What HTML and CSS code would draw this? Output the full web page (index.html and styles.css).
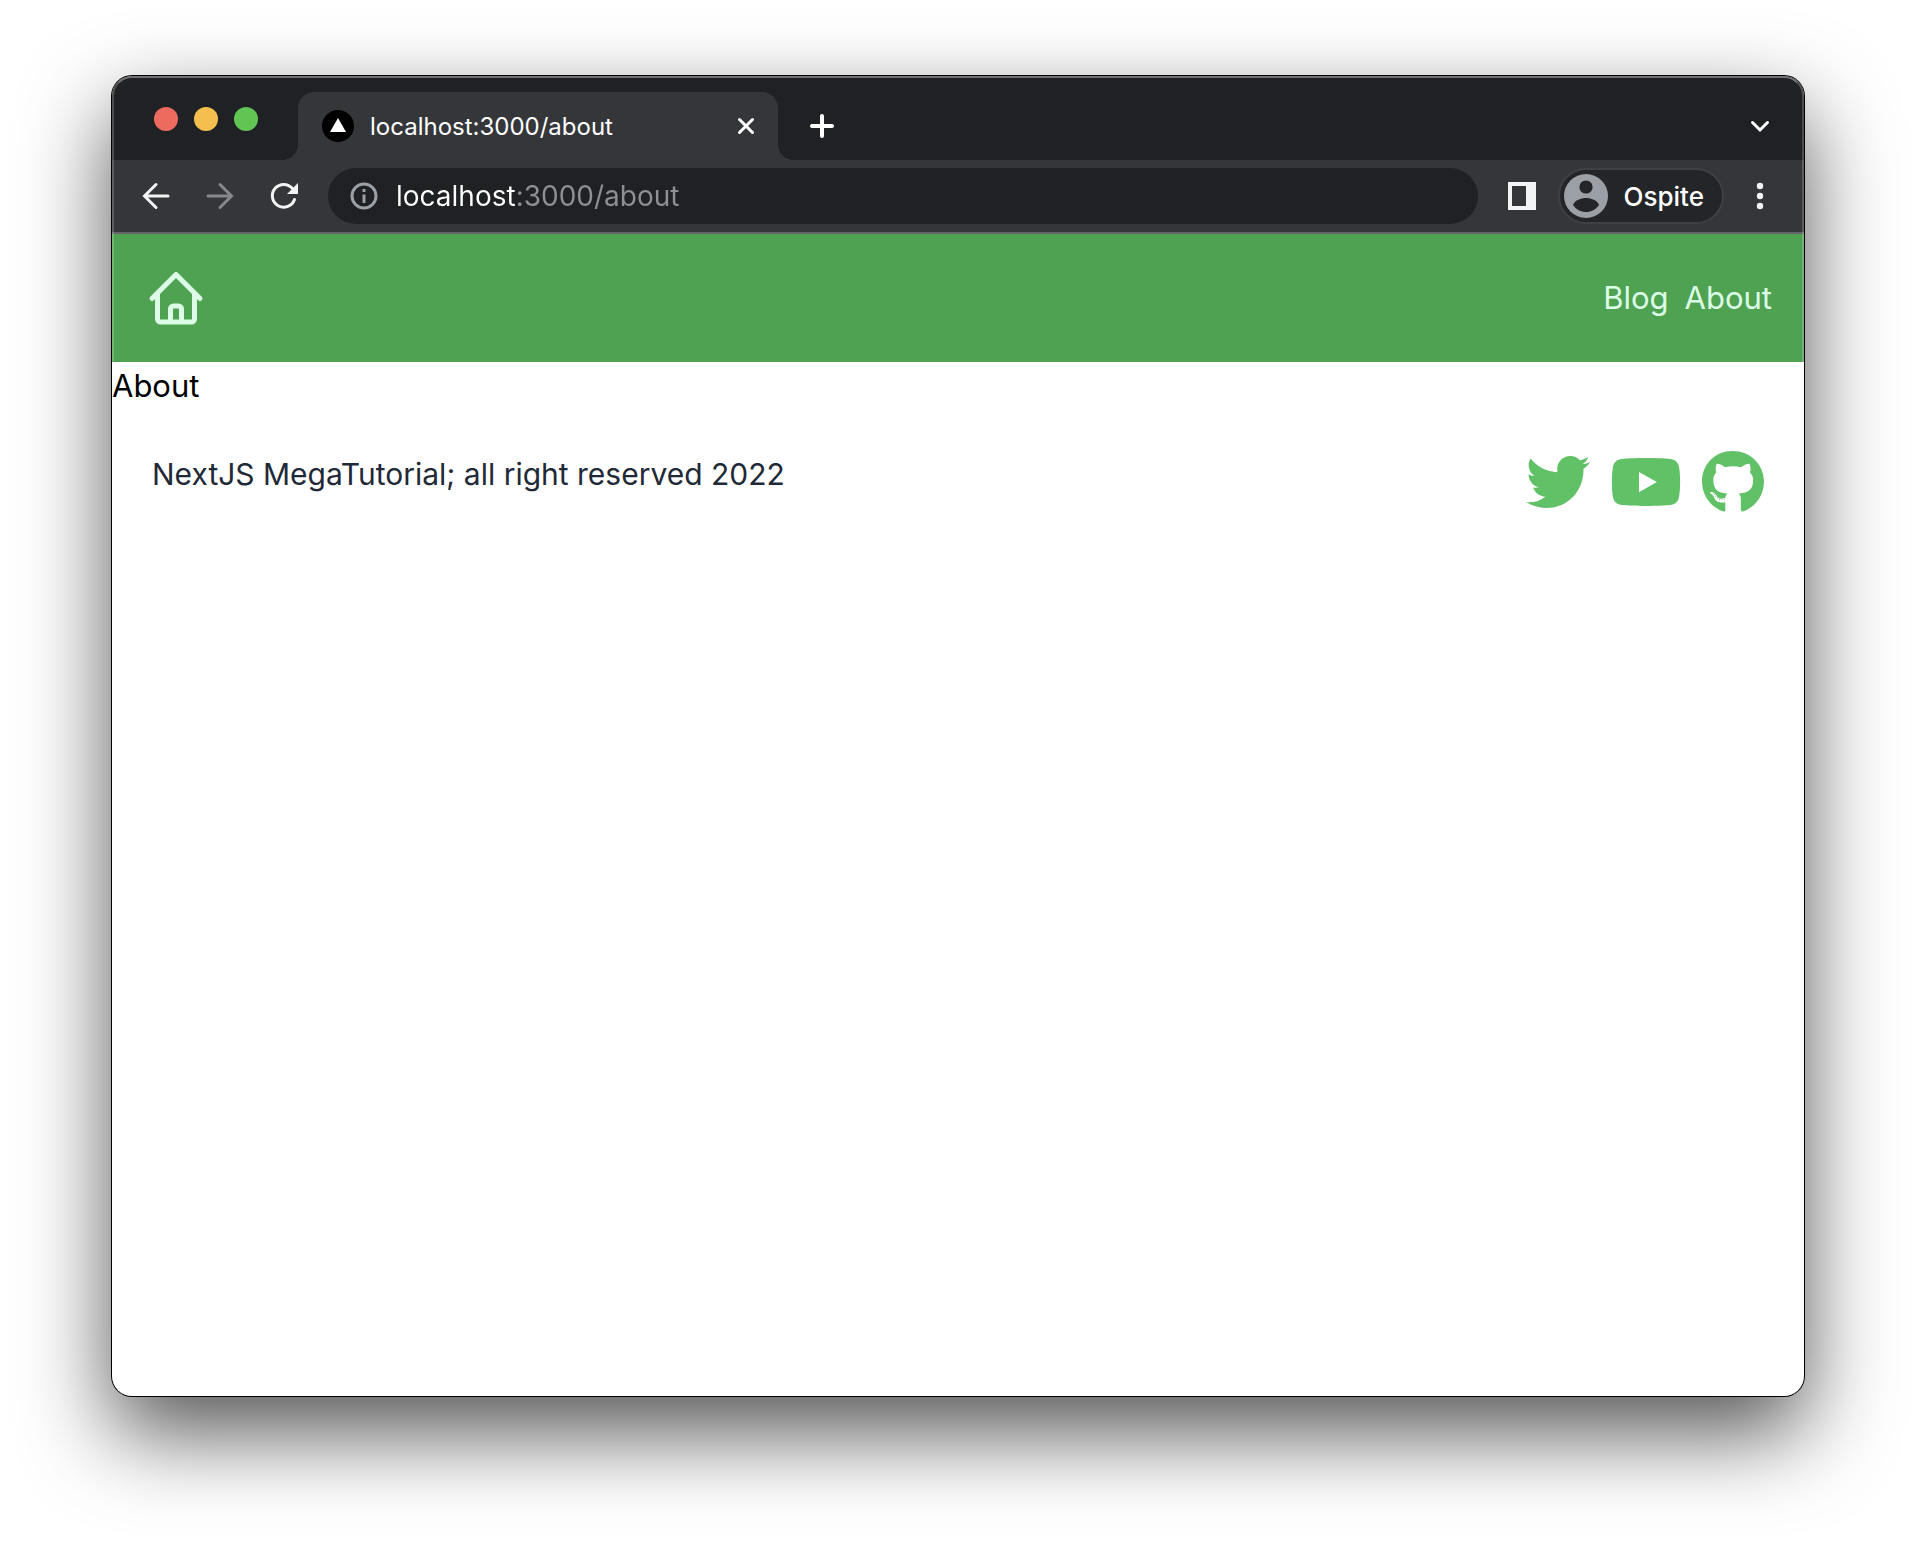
FILE: index.html
```html
<!DOCTYPE html>
<html lang="en">
<head>
<meta charset="utf-8">
<meta name="viewport" content="width=device-width, initial-scale=1">
<title>localhost:3000/about</title>
<link rel="stylesheet" href="styles.css">
</head>
<body>
<div class="window">
  <div class="tab-strip">
    <div class="lights">
      <button class="light light-close" aria-label="Close window"></button>
      <button class="light light-minimize" aria-label="Minimize window"></button>
      <button class="light light-zoom" aria-label="Zoom window"></button>
    </div>
    <div class="tab">
      <svg class="favicon" viewBox="0 0 32 32" aria-hidden="true"><circle cx="16" cy="16" r="16"/><path d="M16 8l8 14H8z" fill="#fff"/></svg>
      <span class="tab-title">localhost:3000/about</span>
      <button class="tab-close" aria-label="Close tab"><svg viewBox="0 0 24 24" width="24" height="24"><path d="M5.500 5.500l13 13m0-13l-13 13"/></svg></button>
    </div>
    <button class="strip-button" aria-label="New tab"><svg viewBox="0 0 24 24" width="24" height="24"><path class="thick" d="M12 2v20M2 12h20"/></svg></button>
    <button class="strip-button tab-search" aria-label="Search tabs"><svg viewBox="0 0 24 24" width="24" height="24"><path d="M4.500 8.500l7.500 7.500 7.500-7.500"/></svg></button>
  </div>
  <div class="toolbar">
    <button class="tool" aria-label="Back"><svg viewBox="0 0 32 32" width="32" height="32"><path d="M28 16H5M16 4.500L4.500 16 16 27.500"/></svg></button>
    <button class="tool tool-off" aria-label="Forward" disabled><svg viewBox="0 0 32 32" width="32" height="32"><path d="M4 16h23M16 4.500L27.500 16 16 27.500"/></svg></button>
    <button class="tool" aria-label="Reload"><svg viewBox="0 0 32 32" width="32" height="32"><path d="M26.500 19.500A11.400 11.400 0 1 1 24.500 8.500"/><path class="solid" d="M30 3v11H19z"/></svg></button>
    <label class="omnibox">
      <svg viewBox="0 0 28 28" width="28" height="28" aria-hidden="true"><circle cx="14" cy="14" r="12"/><path class="info" d="M14 12.500V21M14 7v3"/></svg>
      <input class="address" type="text" value="localhost:3000/about" aria-label="Address">
    </label>
    <button class="tool" aria-label="Side panel"><svg viewBox="0 0 28 28" width="28" height="28"><path class="solid" fill-rule="evenodd" d="M0 0h28v28H0zM4 4v20h14V4z"/></svg></button>
    <button class="profile">
      <svg viewBox="0 0 44 44" width="44" height="44" aria-hidden="true"><circle cx="22" cy="22" r="22" fill="#9aa0a6"/><circle cx="22" cy="13" r="6.600" fill="#242528"/><path d="M9 31C11 26 17 24 22 24s11 2 13 7c-3 4.500-8 7-13 7s-10-2.500-13-7z" fill="#242528"/></svg>
      <span>Ospite</span>
    </button>
    <button class="tool" aria-label="Menu"><svg viewBox="0 0 28 28" width="28" height="28"><g class="solid"><circle cx="14" cy="4" r="3.200"/><circle cx="14" cy="14" r="3.200"/><circle cx="14" cy="24" r="3.200"/></g></svg></button>
  </div>
  <div class="page">
    <header class="header">
      <a class="home" href="#" aria-label="Home"><svg viewBox="0 0 64 64" width="64" height="64"><path d="M8 32.500L32 8.500l24 24M13.500 28v25a3 3 0 0 0 3 3h31a3 3 0 0 0 3-3V28M26.500 55V43a3 3 0 0 1 3-3h5a3 3 0 0 1 3 3v12"/></svg></a>
      <nav class="nav">
        <a href="#">Blog</a>
        <a href="#">About</a>
      </nav>
    </header>
    <main>About</main>
    <footer class="footer">
      <p>NextJS MegaTutorial; all right reserved 2022</p>
      <div class="social">
        <a href="#" aria-label="Twitter"><svg viewBox="0 0 512 512" width="64" height="64"><path d="M459.370 151.716c.325 4.548.325 9.097.325 13.645 0 138.720-105.583 298.558-298.558 298.558-59.452 0-114.680-17.219-161.137-47.106 8.447.974 16.568 1.299 25.340 1.299 49.055 0 94.213-16.568 130.274-44.832-46.132-.975-84.792-31.188-98.112-72.772 6.498.974 12.995 1.624 19.818 1.624 9.421 0 18.843-1.300 27.614-3.573-48.081-9.747-84.143-51.980-84.143-102.985v-1.299c13.969 7.797 30.214 12.670 47.431 13.319-28.264-18.843-46.781-51.005-46.781-87.391 0-19.492 5.197-37.360 14.294-52.954 51.655 63.675 129.300 105.258 216.365 109.807-1.624-7.797-2.599-15.918-2.599-24.040 0-57.828 46.782-104.934 104.934-104.934 30.213 0 57.502 12.670 76.670 33.137 23.715-4.548 46.456-13.320 66.599-25.340-7.798 24.366-24.366 44.833-46.132 57.827 21.117-2.273 41.584-8.122 60.426-16.243-14.292 20.791-32.161 39.308-52.628 54.253z"/></svg></a>
        <a href="#" aria-label="YouTube"><svg viewBox="0 0 576 512" width="72" height="64"><path d="M549.655 124.083c-6.281-23.650-24.787-42.276-48.284-48.597C458.781 64 288 64 288 64S117.220 64 74.629 75.486c-23.497 6.322-42.003 24.947-48.284 48.597-11.412 42.867-11.412 132.305-11.412 132.305s0 89.438 11.412 132.305c6.281 23.650 24.787 41.500 48.284 47.821C117.220 448 288 448 288 448s170.780 0 213.371-11.486c23.497-6.321 42.003-24.171 48.284-47.821 11.412-42.867 11.412-132.305 11.412-132.305s0-89.438-11.412-132.305zm-317.510 213.508V175.185l142.739 81.205-142.739 81.201z"/></svg></a>
        <a href="#" aria-label="GitHub"><svg viewBox="0 0 496 512" width="62" height="64"><path d="M165.900 397.400c0 2-2.300 3.600-5.200 3.600-3.300.3-5.600-1.300-5.600-3.600 0-2 2.300-3.600 5.200-3.600 3-.3 5.600 1.300 5.600 3.600zm-31.100-4.500c-.7 2 1.300 4.300 4.300 4.900 2.600 1 5.600 0 6.200-2s-1.300-4.300-4.300-5.200c-2.600-.7-5.500.3-6.200 2.300zm44.200-1.700c-2.900.7-4.900 2.600-4.600 4.900.3 2 2.900 3.300 5.900 2.600 2.900-.7 4.900-2.600 4.600-4.600-.3-1.900-3-3.200-5.900-2.900zM244.800 8C106.100 8 0 113.300 0 252c0 110.900 69.800 205.800 169.500 239.200 12.800 2.300 17.300-5.600 17.300-12.100 0-6.200-.3-40.400-.3-61.400 0 0-70 15-84.700-29.800 0 0-11.400-29.100-27.800-36.600 0 0-22.900-15.700 1.600-15.400 0 0 24.900 2 38.600 25.800 21.900 38.600 58.600 27.500 72.900 20.900 2.300-16 8.800-27.100 16-33.700-55.900-6.200-112.300-14.300-112.300-110.500 0-27.500 7.600-41.300 23.600-58.900-2.600-6.500-11.100-33.300 2.600-67.900 20.900-6.500 69 27 69 27 20-5.600 41.500-8.500 62.800-8.500s42.800 2.900 62.800 8.500c0 0 48.100-33.600 69-27 13.700 34.700 5.200 61.400 2.600 67.900 16 17.700 25.800 31.500 25.800 58.900 0 96.500-58.900 104.200-114.800 110.500 9.200 7.900 17 22.900 17 46.400 0 33.700-.3 75.400-.3 83.600 0 6.500 4.600 14.400 17.300 12.100C428.200 457.800 496 362.900 496 252 496 113.300 383.500 8 244.800 8zM97.200 352.900c-1.300 1-1 3.300.7 5.200 1.600 1.600 3.900 2.300 5.200 1 1.300-1 1-3.300-.7-5.200-1.600-1.600-3.900-2.300-5.200-1zm-10.800-8.100c-.7 1.300.3 2.900 2.300 3.900 1.600 1 3.600.7 4.300-.7.700-1.300-.3-2.900-2.300-3.900-2-.6-3.600-.3-4.300.7zm32.400 35.600c-1.600 1.300-1 4.300 1.300 6.200 2.300 2.300 5.200 2.600 6.500 1 1.300-1.300.7-4.300-1.300-6.200-2.200-2.300-5.200-2.600-6.500-1zm-11.400-14.700c-1.600 1-1.600 3.600 0 5.900 1.600 2.300 4.300 3.300 5.600 2.300 1.600-1.300 1.600-3.900 0-6.200-1.400-2.300-4-3.300-5.600-2z"/></svg></a>
      </div>
    </footer>
  </div>
</div>
</body>
</html>
```

FILE: styles.css
```css
* {
  box-sizing: border-box;
}

body {
  display: flex;
  flex-direction: column;
  min-height: 100vh;
  margin: 0;
  padding: 76px 112px 148px;
  background: #fff;
  font-family: Inter, "Liberation Sans", sans-serif;
}

button {
  display: flex;
  align-items: center;
  justify-content: center;
  padding: 0;
  border: 0;
  background: none;
  color: inherit;
  font: inherit;
}

a {
  color: inherit;
  text-decoration: none;
}

svg {
  display: block;
  flex: none;
}

.window {
  position: relative;
  display: flex;
  flex: 1;
  flex-direction: column;
  overflow: hidden;
  border-radius: 20px;
  background: #fff;
  box-shadow: 0 0 0 1px #000, 0 36px 88px rgba(0, 0, 0, 0.68);
}

/* light rim along the inside of the window frame */
.window::after {
  position: absolute;
  inset: 0;
  border: 2px solid rgba(255, 255, 255, 0.2);
  border-top-color: rgba(255, 255, 255, 0.36);
  border-radius: 20px;
  content: "";
  pointer-events: none;
}

.tab-strip {
  display: flex;
  height: 84px;
  padding: 16px 16px 0 42px;
  background: #202124;
  color: #fff;
}

.tab-strip svg,
.toolbar svg {
  fill: none;
  stroke: currentColor;
  stroke-width: 3;
  stroke-linecap: round;
}

.lights {
  display: flex;
  gap: 16px;
  width: 144px;
  padding-top: 15px;
}

.light {
  width: 24px;
  height: 24px;
  border-radius: 50%;
}

.light-close {
  background: #ed6a5e;
}

.light-minimize {
  background: #f5bf4f;
}

.light-zoom {
  background: #61c554;
}

.tab {
  position: relative;
  display: flex;
  align-items: center;
  gap: 16px;
  width: 480px;
  padding: 0 16px 0 24px;
  border-radius: 16px 16px 0 0;
  background: #35363a;
}

/* flared feet joining the tab to the toolbar */
.tab::before,
.tab::after {
  position: absolute;
  bottom: 0;
  width: 16px;
  height: 16px;
  content: "";
}

.tab::before {
  right: 100%;
  background: radial-gradient(circle at 0 0, transparent 16px, #35363a 16px);
}

.tab::after {
  left: 100%;
  background: radial-gradient(circle at 100% 0, transparent 16px, #35363a 16px);
}

.tab-strip .favicon {
  width: 32px;
  height: 32px;
  fill: #000;
  stroke: none;
}

.tab-title {
  flex: 1;
  font-size: 24px;
}

.tab-close {
  width: 32px;
  height: 32px;
}

.strip-button {
  width: 56px;
  height: 68px;
  margin-left: 16px;
}

.tab-strip .thick {
  stroke-width: 4;
}

.tab-search {
  margin-left: auto;
}

.toolbar {
  display: flex;
  align-items: center;
  gap: 8px;
  height: 74px;
  padding: 0 16px;
  border-bottom: 2px solid #67636a;
  background: #35363a;
  color: #f1f3f4;
}

.tool {
  width: 56px;
  height: 56px;
}

.tool-off {
  color: #87888b;
}

.toolbar .solid {
  fill: currentColor;
  stroke: none;
}

.omnibox {
  display: flex;
  flex: 1;
  align-items: center;
  gap: 18px;
  height: 56px;
  margin: 0 8px;
  padding: 0 22px;
  border-radius: 28px;
  background: #202124;
  color: #9aa0a6;
}

.toolbar .info {
  stroke-linecap: butt;
}

.address {
  flex: 1;
  min-width: 0;
  height: 40px;
  padding: 0;
  border: 0;
  outline: 0;
  background: linear-gradient(90deg, #fff 120px, #8f9093 120px);
  background-clip: text;
  color: transparent;
  font: 28px Inter, "Liberation Sans", sans-serif;
}

.profile {
  gap: 16px;
  height: 56px;
  padding: 0 18px 0 4px;
  border: 2px solid #3f4044;
  border-radius: 28px;
  background: #242528;
  color: #fff;
  font-size: 26px;
  font-weight: 500;
}

.toolbar .profile svg {
  stroke: none;
}

.page {
  font-size: 31px;
  line-height: 48px;
}

.header {
  display: flex;
  align-items: center;
  justify-content: space-between;
  height: 128px;
  padding: 0 32px;
  background: #4fa251;
  color: #dcfce7;
}

.home svg {
  fill: none;
  stroke: currentColor;
  stroke-width: 5;
  stroke-linecap: round;
  stroke-linejoin: round;
}

.nav {
  display: flex;
  gap: 16px;
}

main {
  color: #000;
}

.footer {
  display: flex;
  justify-content: space-between;
  padding: 40px;
  color: #1f2937;
  font-size: 30px;
}

.footer p {
  margin: 0;
}

.social {
  display: flex;
  gap: 20px;
  color: #60c166;
}

.social svg {
  fill: currentColor;
}
```
